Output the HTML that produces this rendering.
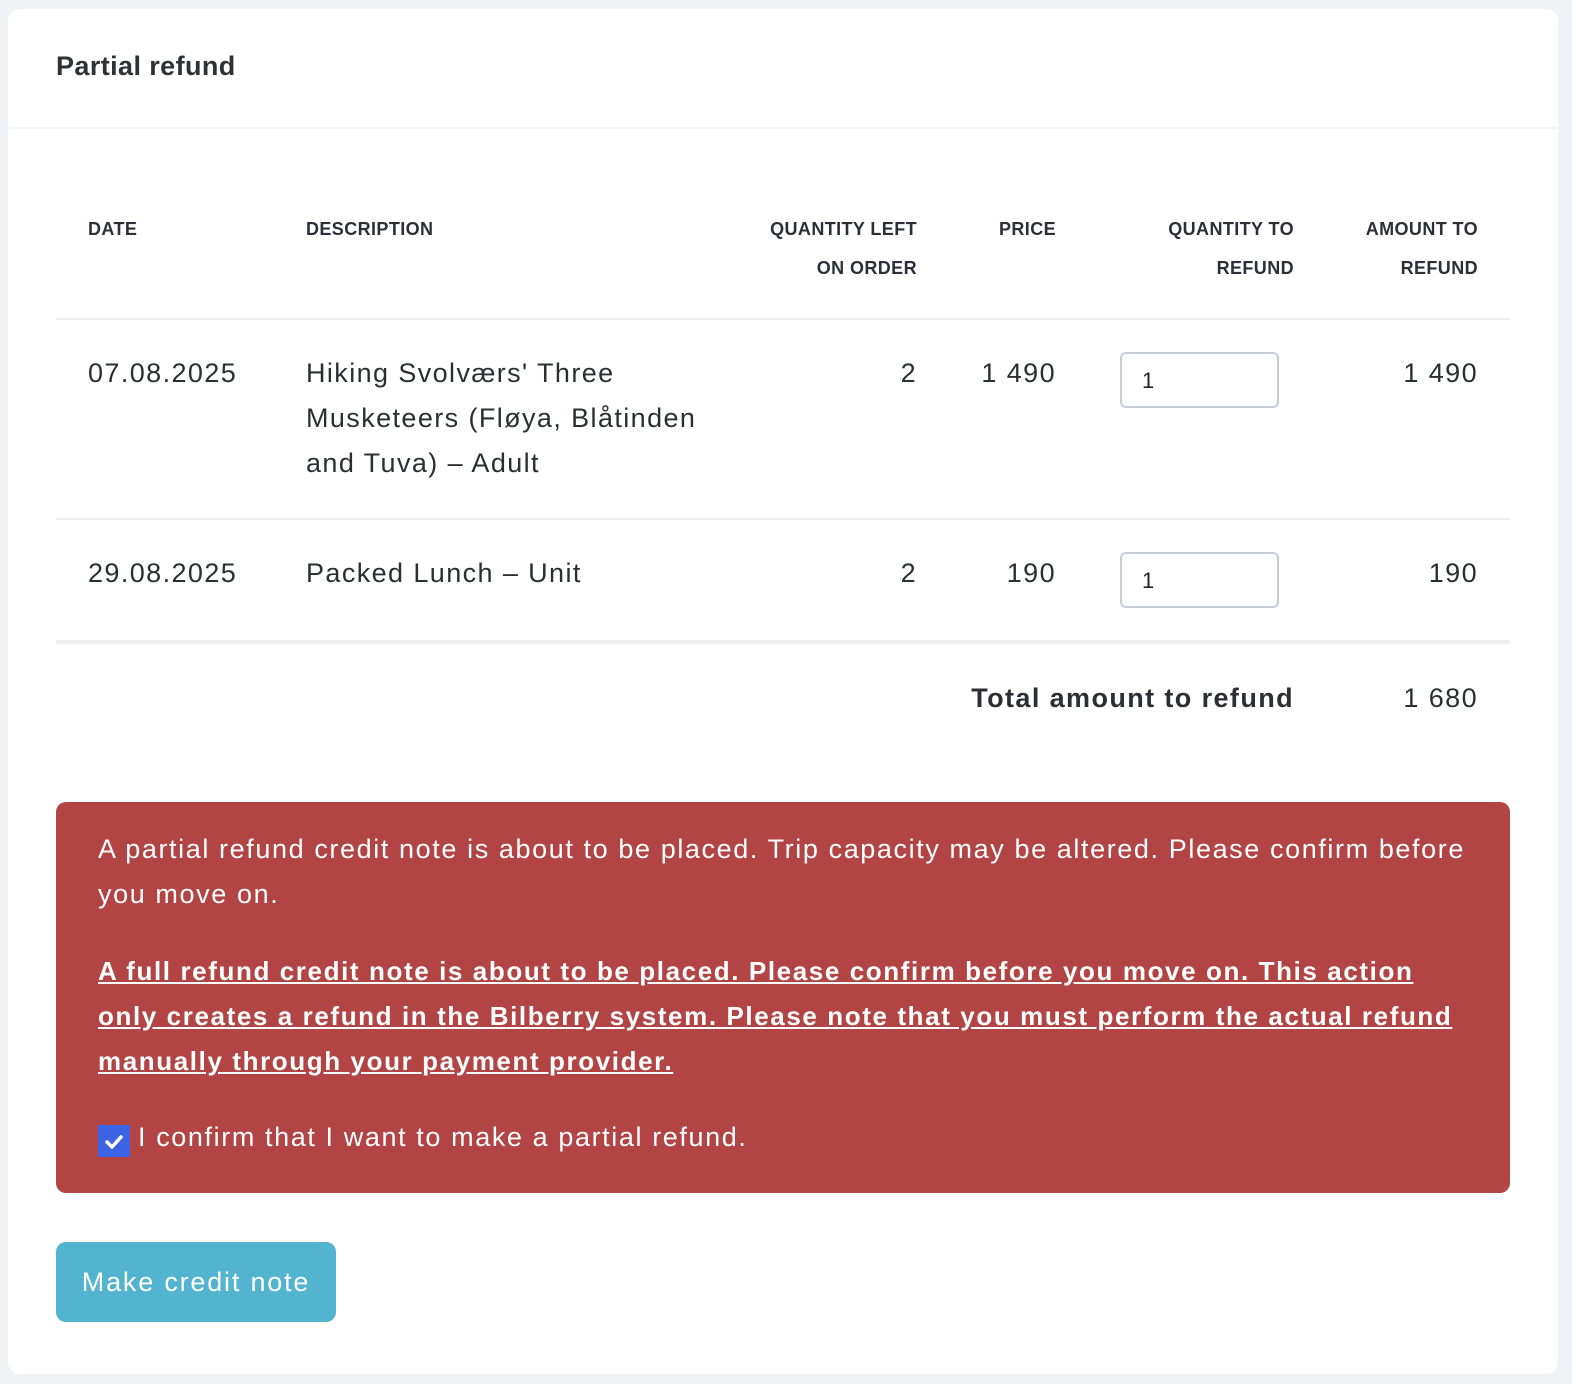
<!DOCTYPE html>
<html><head><meta charset="utf-8"><style>
*{margin:0;padding:0;box-sizing:border-box}
body{width:1572px;height:1384px;background:#f1f2f6;font-family:"Liberation Sans",sans-serif;color:#2b2f33;position:relative;overflow:hidden}
.card{position:absolute;left:8px;top:9px;width:1550px;height:1365px;background:#fff;border-radius:12px}
.a{position:absolute;white-space:nowrap}
.h{font-size:18px;font-weight:bold;line-height:39px;color:#2b3038;letter-spacing:0.4px}
.t{font-size:27px;line-height:45px;color:#2b2f33;letter-spacing:1.4px}
.r{text-align:right}
.line{position:absolute;left:56px;width:1454px;height:2px;background:#eef0f3}
.inp{position:absolute;left:1120px;width:159px;height:56px;border:2px solid #c7cfd6;border-radius:6px;font-size:22px;padding:14px 0 0 20px;color:#222}
.alert{position:absolute;left:56px;top:802px;width:1454px;height:391px;background:#b24444;border-radius:10px;color:#fff}
.alert .a{font-size:27px;line-height:45px;color:#fff;letter-spacing:1.6px}
</style></head><body>
<div class="card"></div>
<div class="a" style="left:56px;top:51px;font-size:27px;font-weight:bold;color:#2e3135;letter-spacing:0.4px">Partial refund</div>
<div style="position:absolute;left:8px;top:127px;width:1550px;height:2px;background:#f1f2f5"></div>

<div class="a h" style="left:88px;top:210px">DATE</div>
<div class="a h" style="left:306px;top:210px">DESCRIPTION</div>
<div class="a h r" style="right:655px;top:210px">QUANTITY LEFT<br>ON ORDER</div>
<div class="a h r" style="right:516px;top:210px">PRICE</div>
<div class="a h r" style="right:278px;top:210px">QUANTITY TO<br>REFUND</div>
<div class="a h r" style="right:94px;top:210px">AMOUNT TO<br>REFUND</div>
<div class="line" style="top:318px"></div>

<div class="a t" style="left:88px;top:351px">07.08.2025</div>
<div class="a t" style="left:306px;top:351px">Hiking Svolværs' Three<br>Musketeers (Fløya, Blåtinden<br>and Tuva) – Adult</div>
<div class="a t r" style="right:655px;top:351px">2</div>
<div class="a t r" style="right:516px;top:351px">1 490</div>
<div class="inp" style="top:352px">1</div>
<div class="a t r" style="right:94px;top:351px">1 490</div>
<div class="line" style="top:518px"></div>

<div class="a t" style="left:88px;top:551px">29.08.2025</div>
<div class="a t" style="left:306px;top:551px">Packed Lunch – Unit</div>
<div class="a t r" style="right:655px;top:551px">2</div>
<div class="a t r" style="right:516px;top:551px">190</div>
<div class="inp" style="top:552px">1</div>
<div class="a t r" style="right:94px;top:551px">190</div>
<div class="line" style="top:640px;height:4px"></div>

<div class="a t r" style="right:278px;top:676px;font-weight:bold">Total amount to refund</div>
<div class="a t r" style="right:94px;top:676px">1 680</div>

<div class="alert">
<div class="a" style="left:42px;top:25px">A partial refund credit note is about to be placed. Trip capacity may be altered. Please confirm before<br>you move on.</div>
<div class="a" style="left:42px;top:147px;font-weight:bold;text-decoration:underline;font-size:26px">A full refund credit note is about to be placed. Please confirm before you move on. This action<br>only creates a refund in the Bilberry system. Please note that you must perform the actual refund<br>manually through your payment provider.</div>
<div style="position:absolute;left:42px;top:323px;width:32px;height:32px;background:#3b63e3"><svg width="32" height="32"><path d="M9 17l5 5 9-10" stroke="#fff" stroke-width="3.5" fill="none" stroke-linecap="round" stroke-linejoin="round"/></svg></div>
<div class="a" style="left:82px;top:313px">I confirm that I want to make a partial refund.</div>
</div>

<div style="position:absolute;left:56px;top:1242px;width:280px;height:80px;background:#52b4cf;border-radius:10px;color:#fff;font-size:27px;line-height:80px;text-align:center;letter-spacing:1.8px">Make credit note</div>
</body></html>
